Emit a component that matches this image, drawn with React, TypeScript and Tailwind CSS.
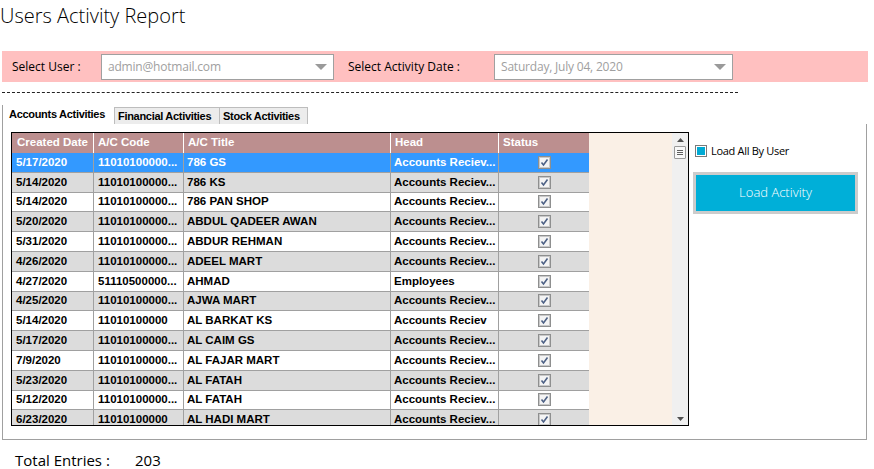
const rows = [
  ['5/17/2020', '11010100000...', '786 GS', 'Accounts Reciev...'],
  ['5/14/2020', '11010100000...', '786 KS', 'Accounts Reciev...'],
  ['5/14/2020', '11010100000...', '786 PAN SHOP', 'Accounts Reciev...'],
  ['5/20/2020', '11010100000...', 'ABDUL QADEER AWAN', 'Accounts Reciev...'],
  ['5/31/2020', '11010100000...', 'ABDUR REHMAN', 'Accounts Reciev...'],
  ['4/26/2020', '11010100000...', 'ADEEL MART', 'Accounts Reciev...'],
  ['4/27/2020', '51110500000...', 'AHMAD', 'Employees'],
  ['4/25/2020', '11010100000...', 'AJWA MART', 'Accounts Reciev...'],
  ['5/14/2020', '11010100000', 'AL BARKAT KS', 'Accounts Reciev'],
  ['5/17/2020', '11010100000...', 'AL CAIM GS', 'Accounts Reciev...'],
  ['7/9/2020', '11010100000...', 'AL FAJAR MART', 'Accounts Reciev...'],
  ['5/23/2020', '11010100000...', 'AL FATAH', 'Accounts Reciev...'],
  ['5/12/2020', '11010100000...', 'AL FATAH', 'Accounts Reciev...'],
  ['6/23/2020', '11010100000', 'AL HADI MART', 'Accounts Reciev...'],
];

function GridCheck() {
  return (
    <svg width="13" height="13" viewBox="0 0 13 13">
      <rect x="0.5" y="0.5" width="12" height="12" fill="#e6e6e6" stroke="#8e8f8f" />
      <rect x="1.5" y="1.5" width="10" height="10" fill="#f4f4f4" stroke="#c8c8c8" />
      <path d="M3.5 6.5 L5.5 9 L9.5 3.5" fill="none" stroke="#4d6185" strokeWidth="1.6" />
    </svg>
  );
}

function Combo({ value, width }: { value: string; width: string }) {
  return (
    <div className={`${width} h-[26px] bg-white border border-[#a0a0a0] flex items-center justify-between pl-[6px] pr-[6px]`}>
      <span className="text-[12px] tracking-[-0.2px] text-[#a0a0a0]">{value}</span>
      <svg width="12" height="6" viewBox="0 0 12 6"><path d="M0 0 H12 L6 6 Z" fill="#9a9a9a" /></svg>
    </div>
  );
}

export default function App() {
  return (
    <div className="w-[874px] h-[469px] bg-white relative overflow-hidden font-['Open_Sans',sans-serif] text-black">
      <h1 className="pt-[2px] h-[51px] text-[20px] font-light leading-[28px]">Users Activity Report</h1>

      <div className="mx-[2px] w-[866px] h-[31px] bg-[#ffc0c0] flex items-center">
        <span className="pl-[10px] w-[99px] text-[12px]">Select User :</span>
        <Combo value="admin@hotmail.com" width="w-[233px]" />
        <span className="pl-[14px] w-[160px] text-[12px]">Select Activity Date :</span>
        <Combo value="Saturday, July 04, 2020" width="w-[239px]" />
      </div>

      <div className="mt-[10px] ml-[2px] w-[736px] border-t border-dashed border-[#222]" />

      <div className="mt-[12px] ml-[2px] w-[865px] h-[335px] border-l border-[#a0a0a0] flex flex-col">
        <div className="flex items-end h-[19px] pl-[5px] font-['Liberation_Sans',sans-serif] font-bold text-[11px] tracking-[-0.3px]">
          <div className="w-[106px] h-[19px] bg-white flex items-center pl-[1px] whitespace-nowrap">Accounts Activities</div>
          <div className="w-[106px] h-[17px] bg-[#ececec] border border-[#bdbdbd] border-b-0 flex items-center pl-[3px] whitespace-nowrap">Financial Activities</div>
          <div className="w-[88px] h-[17px] bg-[#ececec] border border-[#bdbdbd] border-b-0 border-l-0 flex items-center pl-[3px] whitespace-nowrap">Stock Activities</div>
        </div>
        <div className="flex-1 border-r border-b border-[#a0a0a0] flex pt-[8px] pl-[8px]">
          <div className="w-[678px] h-[294px] border border-black flex overflow-hidden">
            <div className="w-[577px] flex flex-col font-['Liberation_Sans',sans-serif] font-bold text-[11.5px]">
              <div className="flex h-[20px] shrink-0 bg-[#bc8f8f] text-white">
                <div className="w-[82px] pl-[5px] flex items-center border-r border-white">Created Date</div>
                <div className="w-[90px] pl-[4px] flex items-center border-r border-white">A/C Code</div>
                <div className="w-[207px] pl-[4px] flex items-center border-r border-white">A/C Title</div>
                <div className="w-[108px] pl-[4px] flex items-center border-r border-white">Head</div>
                <div className="w-[90px] pl-[4px] flex items-center">Status</div>
              </div>
              {rows.map((r, i) => {
                const sel = i === 0;
                const bg = sel ? 'bg-[#3399ff] text-white' : i % 2 === 1 ? 'bg-[#dcdcdc]' : 'bg-white';
                return (
                  <div key={i} className={`flex h-[19.8px] shrink-0 border-b border-[#a0a0a0] ${bg}`}>
                    <div className="w-[82px] pl-[4px] flex items-center border-r border-[#a0a0a0] whitespace-nowrap overflow-hidden">{r[0]}</div>
                    <div className="w-[90px] pl-[4px] flex items-center border-r border-[#a0a0a0] whitespace-nowrap overflow-hidden">{r[1]}</div>
                    <div className="w-[207px] pl-[3px] flex items-center border-r border-[#a0a0a0] whitespace-nowrap overflow-hidden">{r[2]}</div>
                    <div className="w-[108px] pl-[3px] flex items-center border-r border-[#a0a0a0] whitespace-nowrap overflow-hidden">{r[3]}</div>
                    <div className="w-[90px] flex items-center justify-center"><GridCheck /></div>
                  </div>
                );
              })}
            </div>
            <div className="w-[83px] bg-[#faf0e6]" />
            <div className="w-[16px] bg-[#f0f0f0] flex flex-col items-center justify-between pt-[5px] pb-[4px]">
              <div className="flex flex-col items-center gap-[4px]">
                <svg width="7" height="4" viewBox="0 0 7 4"><path d="M0 4 L3.5 0 L7 4 Z" fill="#505050" /></svg>
                <div className="w-[12px] h-[13px] border border-[#9a9a9a] bg-[#f8f8f8] rounded-[1px] flex flex-col items-center justify-center gap-[1px]">
                  <div className="w-[6px] h-px bg-[#606060]" />
                  <div className="w-[6px] h-px bg-[#606060]" />
                  <div className="w-[6px] h-px bg-[#606060]" />
                </div>
              </div>
              <svg width="7" height="4" viewBox="0 0 7 4"><path d="M0 0 L7 0 L3.5 4 Z" fill="#505050" /></svg>
            </div>
          </div>
          <div className="ml-[4px] pt-[11px] flex flex-col">
            <div className="flex items-center gap-[4px] pl-[2px]">
              <div className="w-[12px] h-[12px] border border-[#7a7a7a] bg-white p-[1px]"><div className="w-full h-full bg-[#00aad4]" /></div>
              <span className="text-[11px] tracking-[-0.3px]">Load All By User</span>
            </div>
            <button className="mt-[12px] w-[165px] h-[42px] border-[3px] border-[#cccccc] bg-[#00afd8] text-white text-[13px] font-light">Load Activity</button>
          </div>
        </div>
      </div>

      <div className="mt-[12px] pl-[15px] flex items-center text-[15px] leading-[16px]">
        <span className="w-[120px]">Total Entries :</span>
        <span>203</span>
      </div>
    </div>
  );
}
